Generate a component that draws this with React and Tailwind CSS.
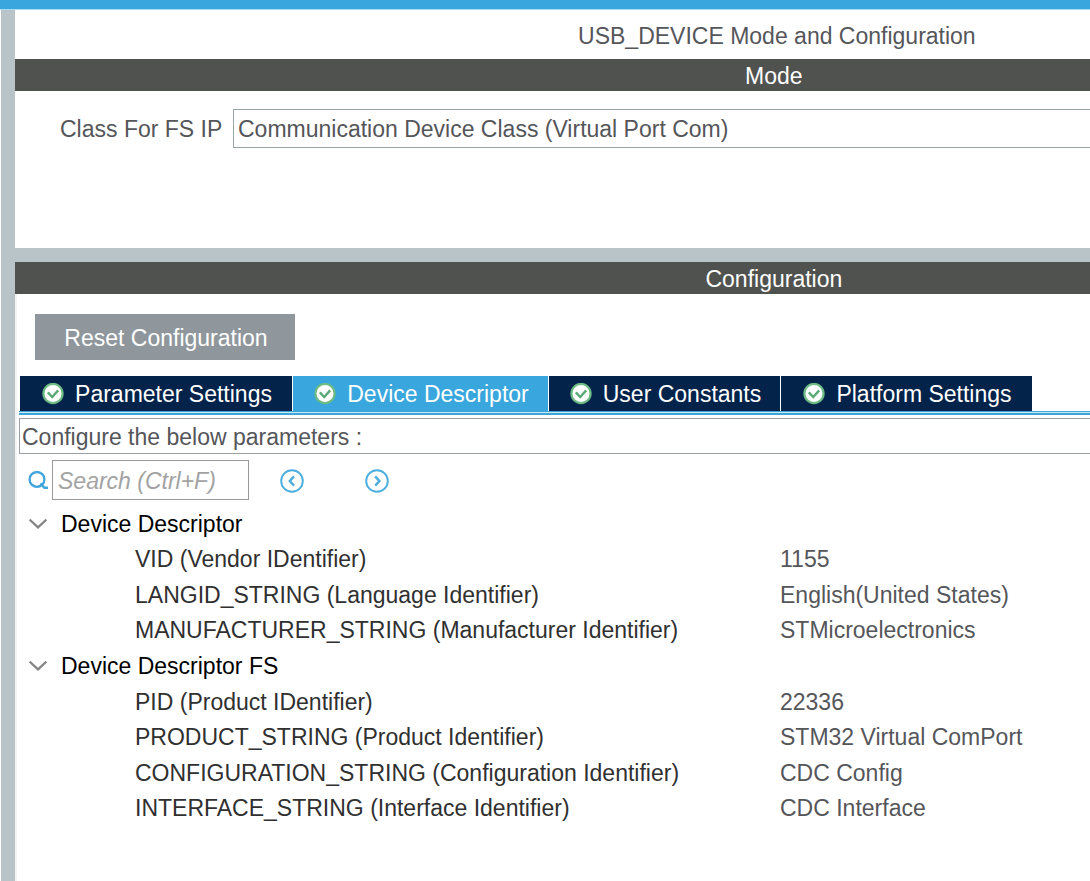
import React, { useState } from "react";

const TABS = [
  { name: "Parameter Settings", size: "w-[272px]" },
  { name: "Device Descriptor", size: "w-[255px]" },
  { name: "User Constants", size: "w-[231px]" },
  { name: "Platform Settings", size: "w-[251px]" },
];

const GROUPS = [
  {
    title: "Device Descriptor",
    items: [
      ["VID (Vendor IDentifier)", "1155"],
      ["LANGID_STRING (Language Identifier)", "English(United States)"],
      ["MANUFACTURER_STRING (Manufacturer Identifier)", "STMicroelectronics"],
    ],
  },
  {
    title: "Device Descriptor FS",
    items: [
      ["PID (Product IDentifier)", "22336"],
      ["PRODUCT_STRING (Product Identifier)", "STM32 Virtual ComPort"],
      ["CONFIGURATION_STRING (Configuration Identifier)", "CDC Config"],
      ["INTERFACE_STRING (Interface Identifier)", "CDC Interface"],
    ],
  },
];

function CheckBadge() {
  return (
    <svg className="size-[22px] shrink-0" viewBox="0 0 22 22" aria-hidden="true">
      <circle cx="11" cy="10.5" r="9.6" fill="#fff" stroke="#6cbb82" strokeWidth="2.2" />
      <path d="M5.8 9.4l4.4 4.6 6-6.6" fill="none" stroke="#5aaa78" strokeWidth="2.4" />
    </svg>
  );
}

function SearchIcon() {
  return (
    <svg className="size-5 shrink-0" viewBox="0 0 20 20" fill="none" stroke="#3fa5dc" aria-hidden="true">
      <circle cx="9" cy="9.4" r="7.4" strokeWidth="2.3" />
      <path d="M12.6 13.4l3.8 4.4H20" strokeWidth="2.4" />
    </svg>
  );
}

function CircleArrow({ d }) {
  return (
    <svg className="size-6" viewBox="0 0 24 24" fill="none" stroke="#4aaede" aria-hidden="true">
      <circle cx="12" cy="12" r="10.8" strokeWidth="1.9" />
      <path d={d} strokeWidth="2.4" />
    </svg>
  );
}

function Chevron() {
  return (
    <svg className="h-3 w-[18px]" viewBox="0 0 18 12" fill="none" stroke="#858585" aria-hidden="true">
      <path d="M0.6 1.6L9 9.4l8.4-7.8" strokeWidth="2.2" />
    </svg>
  );
}

function SectionBar({ children }) {
  return (
    <h2 className="flex h-8 shrink-0 items-center justify-center bg-[#50524f] pt-0.5 pl-0.5 text-white">
      {children}
    </h2>
  );
}

export default function App() {
  const [active, setActive] = useState("Device Descriptor");

  return (
    <div className="flex min-h-screen flex-col overflow-hidden bg-white font-['Liberation_Sans',Arial,sans-serif] text-[23px] leading-7 text-[#55565a]">
      <div className="h-2.5 border-b border-[#a5dcf3] bg-[#39a7dd]" />
      <div className="flex flex-1">
        <div className="ml-px w-3.5 shrink-0 bg-[#b9c4c9]" />
        <main className="flex min-w-0 flex-1 overflow-hidden">
          <div className="flex w-[141%] shrink-0 flex-col">
            <h1 className="flex h-[49px] items-center justify-center pt-0.5 pl-2">
              USB_DEVICE Mode and Configuration
            </h1>

            <SectionBar>Mode</SectionBar>
            <section className="flex items-center pt-[18px] pb-[100px] pl-[45px]">
              <label htmlFor="class-fs" className="w-[173px] shrink-0 whitespace-nowrap">
                Class For FS IP
              </label>
              <select
                id="class-fs"
                className="h-[39px] flex-1 appearance-none border border-[#9aa7a9] bg-white pl-1"
              >
                <option>Communication Device Class (Virtual Port Com)</option>
              </select>
            </section>

            <div className="h-3.5 bg-[#b9c4c9]" />

            <SectionBar>Configuration</SectionBar>
            <section className="flex-1 border-l-2 border-[#f2f4f5] pt-5 pl-0.5">
              <button
                type="button"
                className="ml-4 flex h-[46px] w-[260px] items-center justify-center bg-[#8f979d] pt-0.5 pl-0.5 text-white"
              >
                Reset Configuration
              </button>

              <div role="tablist" className="mt-4 ml-px flex gap-px">
                {TABS.map((tab) => (
                  <button
                    key={tab.name}
                    type="button"
                    role="tab"
                    aria-selected={active === tab.name}
                    onClick={() => setActive(tab.name)}
                    className={`flex h-[35px] shrink-0 items-center justify-center gap-[11px] pl-0.5 whitespace-nowrap text-white ${tab.size} ${
                      active === tab.name ? "bg-[#39a7dd]" : "bg-[#03234b]"
                    }`}
                  >
                    <CheckBadge />
                    <span>{tab.name}</span>
                  </button>
                ))}
              </div>
              <div className="h-1 border-t border-b-2 border-[#3fa5d6] bg-[#c5eafa]" />

              <p className="mt-[3px] flex h-9 items-center border border-[#9ba0a5] pt-0.5 pl-0.5">
                Configure the below parameters :
              </p>

              <div className="mt-[6px] flex items-center pl-[9px]">
                <SearchIcon />
                <input
                  type="text"
                  aria-label="Search"
                  placeholder="Search (Ctrl+F)"
                  className="ml-[4px] h-10 w-[197px] border border-[#96999c] pt-0.5 pl-[5px] italic placeholder:text-[#a3a3a3]"
                />
                <button type="button" aria-label="Previous match" className="ml-[31px] pt-0.5">
                  <CircleArrow d="M14 7.4L9.8 12l4.2 4.6" />
                </button>
                <button type="button" aria-label="Next match" className="ml-[61px] pt-0.5">
                  <CircleArrow d="M10.2 7.4L14.4 12l-4.2 4.6" />
                </button>
              </div>

              <table className="mt-1.5 h-80 w-full table-fixed">
                <colgroup>
                  <col className="w-[761px]" />
                  <col />
                </colgroup>
                {GROUPS.map((group) => (
                  <tbody key={group.title}>
                    <tr>
                      <th colSpan={2} className="text-left font-normal text-black">
                        <div className="flex items-center gap-3.5 pl-2.5">
                          <button type="button" aria-label={`Collapse ${group.title}`}>
                            <Chevron />
                          </button>
                          {group.title}
                        </div>
                      </th>
                    </tr>
                    {group.items.map(([label, value]) => (
                      <tr key={label}>
                        <td className="pl-[116px] whitespace-nowrap text-[#303030]">{label}</td>
                        <td className="whitespace-nowrap">{value}</td>
                      </tr>
                    ))}
                  </tbody>
                ))}
              </table>
            </section>
          </div>
        </main>
      </div>
    </div>
  );
}
